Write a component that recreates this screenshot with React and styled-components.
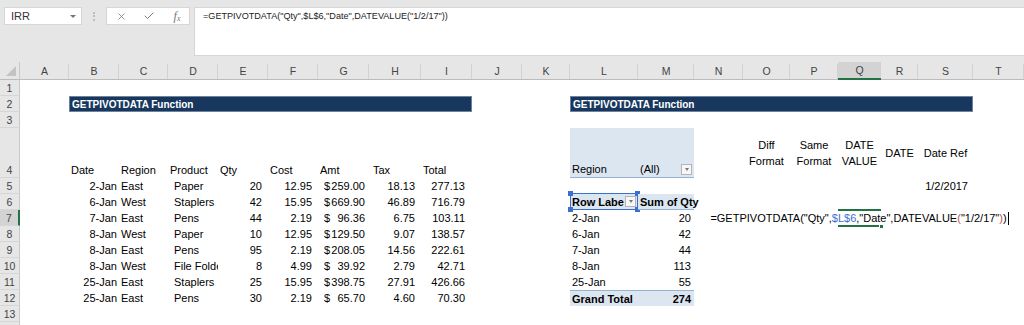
import styled, { createGlobalStyle } from "styled-components";
import { X, Check } from "lucide-react";

const LETTERS = "ABCDEFGHIJKLMNOPQRST".split("");
const WIDTHS = [49, 50, 49, 50, 50, 50, 51, 52, 51, 50, 48, 68, 56, 49, 47, 48, 43, 37, 55, 51];
const HEIGHTS = [16, 16, 16, 50, 16, 16, 16, 16, 16, 16, 16, 16, 16, 16];
const col = (l) => LETTERS.indexOf(l) + 2;

const FORMULA = '=GETPIVOTDATA("Qty",$L$6,"Date",DATEVALUE("1/2/17"))';

const sales = [
    ["2-Jan", "East", "Paper", "20", "12.95", "259.00", "18.13", "277.13"],
    ["6-Jan", "West", "Staplers", "42", "15.95", "669.90", "46.89", "716.79"],
    ["7-Jan", "East", "Pens", "44", "2.19", "96.36", "6.75", "103.11"],
    ["8-Jan", "West", "Paper", "10", "12.95", "129.50", "9.07", "138.57"],
    ["8-Jan", "East", "Pens", "95", "2.19", "208.05", "14.56", "222.61"],
    ["8-Jan", "West", "File Folders", "8", "4.99", "39.92", "2.79", "42.71"],
    ["25-Jan", "East", "Staplers", "25", "15.95", "398.75", "27.91", "426.66"],
    ["25-Jan", "East", "Pens", "30", "2.19", "65.70", "4.60", "70.30"],
]

const pivot = [["2-Jan", 20], ["6-Jan", 42], ["7-Jan", 44], ["8-Jan", 113], ["25-Jan", 55]]

const GlobalStyle = createGlobalStyle`
    html, body {
        margin: 0;
        padding: 0;
        background: #fff;
    }
    body {
        width: 1024px;
        height: 325px;
        overflow: hidden;
        font-family: "Liberation Sans", Arial, sans-serif;
    }
    * { box-sizing: border-box; }
`

const App = () => {
    return (
        <>
            <GlobalStyle />
            <Toolbar>
                <NameBox>
                    IRR
                    <Caret />
                </NameBox>
                <Grip />
                <FxButtons>
                    <X size={11} strokeWidth={1.6} color="#6b6b6b" />
                    <Check size={12} strokeWidth={1.8} color="#6b6b6b" />
                    <Fx>f<sub>x</sub></Fx>
                </FxButtons>
                <FormulaInput>{FORMULA}</FormulaInput>
            </Toolbar>
            <Sheet>
                <Corner><span /></Corner>
                {LETTERS.map(l => (
                    <ColHead key={l} $c={l} $active={l === "Q"}>{l}</ColHead>
                ))}
                {HEIGHTS.map((h, i) => (
                    <RowHead key={i} $r={i + 1} $active={i + 1 === 7}>{i < 13 ? i + 1 : ""}</RowHead>
                ))}

                <Banner $c="B" $r={2} $span={8}>GETPIVOTDATA Function</Banner>
                <Banner $c="L" $r={2} $span={8}>GETPIVOTDATA Function</Banner>

                {["Date", "Region", "Product", "Qty", "Cost", "Amt", "Tax", "Total"].map((t, i) => (
                    <Cell key={t} $c={LETTERS[i + 1]} $r={4} $v="flex-end" $pb={2} $pl={t === "Tax" ? 4 : 2}>{t}</Cell>
                ))}
                {sales.map((r, i) => {
                    const n = i + 5
                    return [
                        <Cell key={"b" + n} $c="B" $r={n} $h="right">{r[0]}</Cell>,
                        <Cell key={"c" + n} $c="C" $r={n}>{r[1]}</Cell>,
                        <Cell key={"d" + n} $c="D" $r={n} $pl={6} $clip>{r[2]}</Cell>,
                        <Cell key={"e" + n} $c="E" $r={n} $h="right" $pr={6}>{r[3]}</Cell>,
                        <Cell key={"f" + n} $c="F" $r={n} $h="right" $pr={6}>{r[4]}</Cell>,
                        <Cell key={"g" + n} $c="G" $r={n} $h="between" $pl={6} $pr={4}><span>$</span><span>{r[5]}</span></Cell>,
                        <Cell key={"h" + n} $c="H" $r={n} $h="right" $pr={6}>{r[6]}</Cell>,
                        <Cell key={"i" + n} $c="I" $r={n} $h="right" $pr={7}>{r[7]}</Cell>,
                    ]
                })}

                <PivotCell $c="L" $r={4} $v="flex-end" $pb={2} $line="bottom">Region</PivotCell>
                <PivotCell $c="M" $r={4} $v="flex-end" $pb={2} $h="between" $line="bottom">
                    (All)<DropBtn />
                </PivotCell>
                <PivotCell $c="L" $r={6} $bold $line="bottom">
                    <Clipped>Row Labels</Clipped><DropBtn />
                    <RefBox><i /><i /><i /><i /></RefBox>
                </PivotCell>
                <PivotCell $c="M" $r={6} $bold $line="bottom">Sum of Qty</PivotCell>
                {pivot.map(([d, q], i) => [
                    <Cell key={"pl" + i} $c="L" $r={i + 7}>{d}</Cell>,
                    <Cell key={"pm" + i} $c="M" $r={i + 7} $h="right" $pr={3}>{q}</Cell>,
                ])}
                <PivotCell $c="L" $r={12} $bold $line="top">Grand Total</PivotCell>
                <PivotCell $c="M" $r={12} $bold $line="top" $h="right" $pr={3}>274</PivotCell>

                {[["O", "Diff Format"], ["P", "Same Format"], ["Q", "DATE VALUE"], ["R", "DATE"], ["S", "Date Ref"]].map(([c, t]) => (
                    <WrapCell key={c} $c={c} $r={4}>{t}</WrapCell>
                ))}
                <Cell $c="S" $r={5} $h="right" $pr={5}>1/2/2017</Cell>

                <ActiveCell $c="Q" $r={7} $h="center">
                    <span>=GETPIVOTDATA("Qty",<Ref>$L$6</Ref>,"Date",DATEVALUE<Paren>(</Paren>"1/2/17"<Paren>)</Paren>)</span>
                    <Cursor />
                    <FillHandle />
                </ActiveCell>
            </Sheet>
        </>
    );
}

const Toolbar = styled.div`
    height: 62px;
    background: #e6e6e6;
    display: flex;
    align-items: flex-start;
    padding: 7px 0 0 4px;
`
const NameBox = styled.div`
    width: 78px;
    height: 18px;
    background: #fff;
    border: 1px solid #d6d6d6;
    display: flex;
    align-items: center;
    justify-content: space-between;
    padding: 0 5px 0 6px;
    font-size: 11px;
    color: #333;
`
const Caret = styled.span`
    width: 0;
    height: 0;
    border-left: 3px solid transparent;
    border-right: 3px solid transparent;
    border-top: 3px solid #777;
`
const Grip = styled.span`
    width: 0;
    height: 9px;
    margin: 5px 11px 0 11px;
    border-left: 2px dotted #bdbdbd;
`
const FxButtons = styled.div`
    width: 84px;
    height: 18px;
    background: #fff;
    border: 1px solid #d6d6d6;
    display: grid;
    grid-template-columns: repeat(3, 28px);
    align-items: center;
    justify-items: center;
`
const Fx = styled.span`
    font-family: "Liberation Serif", "Times New Roman", serif;
    font-style: italic;
    font-size: 12px;
    color: #777;
    line-height: 1;

    sub {
        font-size: 8px;
        vertical-align: -1px;
    }
`
const FormulaInput = styled.div`
    flex: 1;
    height: 49px;
    margin-left: 4px;
    background: #fff;
    border: 1px solid #d6d6d6;
    border-right: none;
    padding: 3px 0 0 8px;
    font-size: 9.1px;
    color: #222;
`
const Sheet = styled.div`
    display: grid;
    grid-template-columns: 20px ${WIDTHS.map(w => w + "px").join(" ")};
    grid-template-rows: 18px ${HEIGHTS.map(h => h + "px").join(" ")};
    width: 1024px;
    font-size: 11px;
    color: #000;
`
const Corner = styled.div`
    grid-column: 1;
    grid-row: 1;
    background: #e6e6e6;
    border-right: 1px solid #c8c8c8;
    border-bottom: 1px solid #bcbcbc;
    position: relative;

    span {
        position: absolute;
        right: 3px;
        bottom: 3px;
        width: 0;
        height: 0;
        border-left: 10px solid transparent;
        border-bottom: 10px solid #c3c3c3;
    }
`
const ColHead = styled.div`
    grid-column: ${p => col(p.$c)};
    grid-row: 1;
    position: relative;
    display: flex;
    align-items: center;
    justify-content: center;
    background: ${p => p.$active ? "#d3d3d3" : "#e6e6e6"};
    border-bottom: ${p => p.$active ? "2px solid #217346" : "1px solid #bcbcbc"};
    color: #444;
    font-size: 10.5px;

    &::after {
        content: "";
        position: absolute;
        right: 0;
        top: 2px;
        bottom: 0;
        width: 1px;
        background: #d2d2d2;
    }
`
const RowHead = styled.div`
    grid-column: 1;
    grid-row: ${p => p.$r + 1};
    display: flex;
    align-items: flex-end;
    justify-content: center;
    padding-bottom: 1px;
    background: ${p => p.$active ? "#d3d3d3" : "#e6e6e6"};
    border-right: ${p => p.$active ? "2px solid #217346" : "1px solid #c8c8c8"};
    border-bottom: 1px solid #d6d6d6;
    color: #444;
    font-size: 10.5px;
`
const alignMap = { left: "flex-start", right: "flex-end", center: "center", between: "space-between" }

const Cell = styled.div`
    grid-column: ${p => col(p.$c)} / span ${p => p.$span || 1};
    grid-row: ${p => p.$r + 1};
    position: relative;
    min-width: 0;
    display: flex;
    align-items: ${p => p.$v || "center"};
    justify-content: ${p => alignMap[p.$h || "left"]};
    padding: 0 ${p => p.$pr ?? 2}px ${p => p.$pb ?? 0}px ${p => p.$pl ?? 2}px;
    font-weight: ${p => p.$bold ? 700 : 400};
    white-space: nowrap;
    overflow: ${p => p.$clip ? "hidden" : "visible"};
`
const Banner = styled(Cell)`
    background: #17375e;
    border: 1px solid #6f819b;
    color: #fff;
    font-weight: 700;
    font-size: 10px;
`
const PivotCell = styled(Cell)`
    background: #dce6f1;
    border-${p => p.$line}: 1px solid #95b3d7;
`
const Clipped = styled.span`
    flex: 1;
    overflow: hidden;
`
const DropBtn = styled.span`
    flex: none;
    width: 11px;
    height: 11px;
    margin-left: 1px;
    background: #f7f7f7;
    border: 1px solid #b4b4b4;
    display: flex;
    align-items: center;
    justify-content: center;

    &::after {
        content: "";
        border-left: 2.5px solid transparent;
        border-right: 2.5px solid transparent;
        border-top: 3px solid #777;
    }
`
const RefBox = styled.span`
    position: absolute;
    left: 0;
    right: 0;
    top: -1px;
    bottom: -1px;
    border: 1px solid #3a6fd0;

    i {
        position: absolute;
        width: 5px;
        height: 5px;
        background: #3a6fd0;
    }
    i:nth-child(1) { left: -3px; top: -3px; }
    i:nth-child(2) { right: -3px; top: -3px; }
    i:nth-child(3) { left: -3px; bottom: -3px; }
    i:nth-child(4) { right: -3px; bottom: -3px; }
`
const WrapCell = styled(Cell)`
    white-space: normal;
    text-align: center;
    justify-content: center;
    line-height: 16px;
    padding: 0 1px;
`
const ActiveCell = styled(Cell)`
    &::before {
        content: "";
        position: absolute;
        left: 0;
        right: 0;
        top: -1px;
        bottom: -1px;
        border-top: 2px solid #217346;
        border-bottom: 2px solid #217346;
    }
`
const Ref = styled.span`
    color: #3a6fd0;
`
const Paren = styled.span`
    color: #c0504d;
`
const Cursor = styled.span`
    flex: none;
    width: 1px;
    height: 13px;
    margin-left: 1px;
    background: #000;
`
const FillHandle = styled.span`
    position: absolute;
    right: -3px;
    bottom: -3px;
    width: 5px;
    height: 5px;
    background: #217346;
    border: 1px solid #fff;
`

export default App;
